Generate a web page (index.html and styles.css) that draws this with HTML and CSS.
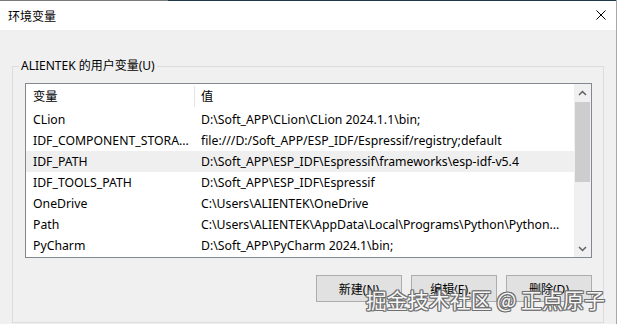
FILE: index.html
```html
<!DOCTYPE html>
<html lang="zh-CN">
<head>
  <meta charset="UTF-8">
  <title>环境变量</title>
  <link rel="stylesheet" href="styles.css">
</head>
<body>
  <div class="window">
    <div class="titlebar">
      <span class="title">环境变量</span>
      <svg class="close" width="10" height="10" viewBox="0 0 10 10">
        <path d="M0.5 0.5 L9.5 9.5 M9.5 0.5 L0.5 9.5" stroke="#000" stroke-width="1" fill="none"/>
      </svg>
    </div>

    <fieldset class="group">
      <legend>ALIENTEK 的用户变量(U)</legend>

      <div class="listbox">
        <div class="list">
          <div class="row head">
            <div class="name">变量</div>
            <div class="value">值</div>
          </div>
          <div class="row">
            <div class="name">CLion</div>
            <div class="value">D:\Soft_APP\CLion\CLion 2024.1.1\bin;</div>
          </div>
          <div class="row">
            <div class="name">IDF_COMPONENT_STORA...</div>
            <div class="value">file:///D:/Soft_APP/ESP_IDF/Espressif/registry;default</div>
          </div>
          <div class="row selected">
            <div class="name">IDF_PATH</div>
            <div class="value">D:\Soft_APP\ESP_IDF\Espressif\frameworks\esp-idf-v5.4</div>
          </div>
          <div class="row">
            <div class="name">IDF_TOOLS_PATH</div>
            <div class="value">D:\Soft_APP\ESP_IDF\Espressif</div>
          </div>
          <div class="row">
            <div class="name">OneDrive</div>
            <div class="value">C:\Users\ALIENTEK\OneDrive</div>
          </div>
          <div class="row">
            <div class="name">Path</div>
            <div class="value">C:\Users\ALIENTEK\AppData\Local\Programs\Python\Python...</div>
          </div>
          <div class="row">
            <div class="name">PyCharm</div>
            <div class="value">D:\Soft_APP\PyCharm 2024.1\bin;</div>
          </div>
        </div>

        <div class="scrollbar">
          <svg class="arrow" width="17" height="17" viewBox="0 0 17 17">
            <polyline points="5,11 8.5,7.5 12,11" stroke="#606060" stroke-width="1.5" fill="none"/>
          </svg>
          <div class="thumb"></div>
          <div class="track"></div>
          <svg class="arrow" width="17" height="17" viewBox="0 0 17 17">
            <polyline points="5,7 8.5,10.5 12,7" stroke="#606060" stroke-width="1.5" fill="none"/>
          </svg>
        </div>
      </div>

      <div class="buttons">
        <button>新建(N)</button>
        <button>编辑(E)...</button>
        <button>删除(D)</button>
      </div>
    </fieldset>

    <div class="watermark">掘金技术社区 @ 正点原子</div>
  </div>
</body>
</html>
```

FILE: styles.css
```css
body {
  margin: 0;
  background: #f0f0f0;
  font-family: 'Noto Sans', 'Noto Sans CJK SC', sans-serif;
  font-size: 12px;
  color: #000;
}
.window {
  position: relative;
  width: 616px;
  height: 324px;
  border-right: 1px solid #a8a8a8;
  display: flex;
  flex-direction: column;
  overflow: hidden;
}
.titlebar {
  height: 30px;
  flex: none;
  display: flex;
  align-items: center;
  justify-content: space-between;
  padding: 0 10px 0 8px;
  background: linear-gradient(to right, #7a7a7a 168px, #1f394c 168px) top / 100% 1px no-repeat, #fff;
}
.title {
  font-size: 12px;
  font-family: 'Noto Sans CJK SC', sans-serif;
}
.group {
  flex: 1;
  margin: 28px 12px 1px 12px;
  padding: 9px 11px 0 12px;
  border: 1px solid #dcdcdc;
  display: flex;
  flex-direction: column;
}
.group legend {
  margin-left: -6px;
  padding: 0 2px;
  line-height: 16px;
}
.listbox {
  height: 173px;
  border: 1px solid #828790;
  background: #fff;
  display: flex;
}
.list {
  flex: 1;
  min-width: 0;
  font-size: 12.25px;
}
.row {
  height: 21px;
  display: flex;
  align-items: center;
  white-space: nowrap;
}
.row .name {
  width: 169px;
  flex: none;
  padding-left: 7px;
  box-sizing: border-box;
  overflow: hidden;
}
.row .value {
  flex: 1;
  min-width: 0;
  padding: 0 8px 0 6px;
  overflow: hidden;
  text-overflow: ellipsis;
}
.row.head {
  height: 25px;
  align-items: flex-start;
}
.row.head .name, .row.head .value {
  margin-top: 2px;
  height: 21px;
  line-height: 21px;
}
.row.head .name {
  border-right: 1px solid #e5e5e5;
}
.row.selected {
  background: #efefef;
}
.scrollbar {
  width: 17px;
  flex: none;
  background: #f0f0f0;
  display: flex;
  flex-direction: column;
}
.arrow {
  display: block;
  flex: none;
}
.thumb {
  height: 80px;
  margin: 1px 1px 0;
  background: #cdcdcd;
}
.track {
  flex: 1;
}
.buttons {
  display: flex;
  justify-content: flex-end;
  gap: 9px;
  margin-top: 17px;
}
.buttons button {
  width: 86px;
  height: 27px;
  border: 1px solid #adadad;
  background: #e1e1e1;
  font: inherit;
  color: #000;
  padding: 0;
}
.watermark {
  position: absolute;
  right: 11px;
  top: 284px;
  font-family: 'Noto Sans CJK SC', sans-serif;
  font-size: 21px;
  color: #f6f6f6;
  white-space: nowrap;
  text-shadow: 1px 0 0 #6e6e6e, -1px 0 0 #6e6e6e, 0 1px 0 #6e6e6e, 0 -1px 0 #6e6e6e,
    1px 1px 0 #6e6e6e, -1px -1px 0 #6e6e6e, 1px -1px 0 #6e6e6e, -1px 1px 0 #6e6e6e;
}
```
